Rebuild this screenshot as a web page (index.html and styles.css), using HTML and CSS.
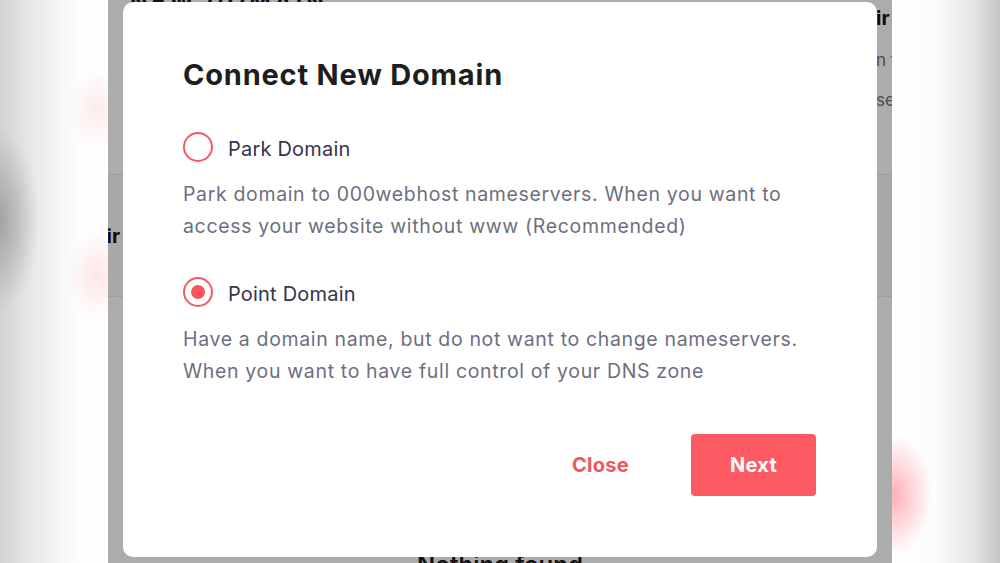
FILE: index.html
```html
<!DOCTYPE html>
<html lang="en">
<head>
  <meta charset="utf-8">
  <title>Connect New Domain</title>
  <link rel="stylesheet" href="styles.css">
</head>
<body>
  <div class="frame">
    <div class="blur blur-left"></div>

    <div class="screen">
      <!-- page behind the dialog -->
      <div class="backdrop">
        <div class="bd-top">
          <div class="bd-title">NEW DOMAIN</div>
          <div class="bd-card">
            <div class="bd-card-title">ir</div>
            <div class="bd-card-text">n t</div>
            <div class="bd-card-text">se</div>
          </div>
        </div>
        <div class="bd-band">
          <div class="bd-band-title">Domain Pair</div>
        </div>
        <div class="bd-empty">Nothing found</div>
      </div>

      <!-- dialog -->
      <div class="modal">
        <h1 class="modal-title">Connect New Domain</h1>

        <div class="option">
          <label class="option-label">
            <span class="radio"></span>
            Park Domain
          </label>
          <p class="option-desc">Park domain to 000webhost nameservers. When you want to access your website without www (Recommended)</p>
        </div>

        <div class="option">
          <label class="option-label">
            <span class="radio checked"></span>
            Point Domain
          </label>
          <p class="option-desc">Have a domain name, but do not want to change nameservers. When you want to have full control of your DNS zone</p>
        </div>

        <div class="modal-actions">
          <button class="btn btn-text">Close</button>
          <button class="btn btn-primary">Next</button>
        </div>
      </div>
    </div>

    <div class="blur blur-right"></div>
  </div>
</body>
</html>
```

FILE: styles.css
```css
* { box-sizing: border-box; }

html, body {
  margin: 0;
  height: 100%;
}

body {
  font-family: "Inter", "Liberation Sans", sans-serif;
  background: #fff;
  overflow: hidden;
}

.frame {
  display: flex;
  width: 1000px;
  height: 563px;
}

/* blurred side panels */
.blur {
  width: 108px;
  flex: none;
}
.blur-left {
  background:
    radial-gradient(ellipse 30px 40px at 98px 110px, rgba(255,120,130,0.15), rgba(255,120,130,0) 100%),
    radial-gradient(ellipse 30px 45px at 98px 275px, rgba(255,120,130,0.18), rgba(255,120,130,0) 100%),
    radial-gradient(ellipse 40px 90px at 0 220px, rgba(130,130,130,0.6), rgba(130,130,130,0) 100%),
    linear-gradient(to right, #d2d2d2 0, #e4e4e4 25px, #f4f4f4 55px, #fdfdfd 80px, #fff 108px);
}
.blur-right {
  background:
    radial-gradient(ellipse 40px 60px at 0 495px, rgba(255,110,120,0.55), rgba(255,110,120,0) 100%),
    linear-gradient(to right, #fff 0, #fbfbfb 45px, #e6e6e6 80px, #cfcfcf 100px, #c2c2c2 108px);
}

/* screenshot area */
.screen {
  position: relative;
  flex: 1;
  background: #acacac;
  overflow: hidden;
}

.backdrop {
  display: flex;
  flex-direction: column;
  height: 100%;
}
.bd-top {
  height: 174px;
  display: flex;
  justify-content: space-between;
}
.bd-title {
  margin: -12px 0 0 22px;
  font-size: 23px;
  font-weight: 700;
  color: #111;
  letter-spacing: 4px;
}
.bd-card {
  width: 16px;
  margin-top: 6px;
  white-space: nowrap;
}
.bd-card-title {
  font-size: 20px;
  font-weight: 700;
  color: #0c0c14;
}
.bd-card-text {
  margin-top: 20px;
  font-size: 17px;
  color: #4a4b55;
}
.bd-band {
  height: 123px;
  background: #a9a9a9;
  border-top: 1px solid #9d9d9d;
  border-bottom: 1px solid #9d9d9d;
  display: flex;
  align-items: center;
}
.bd-band-title {
  margin-left: -105px;
  font-size: 20px;
  font-weight: 700;
  color: #0c0c14;
}
.bd-empty {
  margin-top: auto;
  margin-bottom: -16px;
  text-align: center;
  font-size: 24px;
  font-weight: 600;
  color: #111;
}

/* dialog */
.modal {
  position: absolute;
  left: 15px;
  top: 2px;
  width: 754px;
  height: 555px;
  background: #fff;
  border-radius: 10px;
  padding: 55px 61px 0 60px;
}
.modal-title {
  margin: 0 0 41px;
  font-size: 29px;
  font-weight: 700;
  color: #1d1e20;
  letter-spacing: 0.8px;
}

.option { margin-bottom: 36px; }
.option-label {
  display: flex;
  align-items: center;
  gap: 15px;
  font-size: 20px;
  letter-spacing: 0.2px;
  color: #36344d;
  height: 30px;
  padding-top: 2px;
}
.radio {
  width: 30px;
  height: 30px;
  margin-top: -4px;
  border: 2px solid #f25a64;
  border-radius: 50%;
  display: flex;
  align-items: center;
  justify-content: center;
  flex: none;
}
.radio.checked:after {
  content: "";
  width: 14px;
  height: 14px;
  border-radius: 50%;
  background: #f9545e;
}
.option-desc {
  margin: 15px 0 0;
  font-size: 19.5px;
  letter-spacing: 0.65px;
  line-height: 32px;
  color: #6d6f7e;
  max-width: 620px;
}

.modal-actions {
  display: flex;
  justify-content: flex-end;
  align-items: center;
  gap: 42px;
  margin-top: 47px;
}
.btn {
  font-family: inherit;
  font-size: 20px;
  font-weight: 700;
  letter-spacing: 0.3px;
  border: none;
  cursor: pointer;
}
.btn-text {
  background: none;
  color: #f0565f;
  padding: 0 20px;
}
.btn-primary {
  width: 125px;
  height: 62px;
  background: #fd5a63;
  color: #fff;
  border-radius: 4px;
}
```
